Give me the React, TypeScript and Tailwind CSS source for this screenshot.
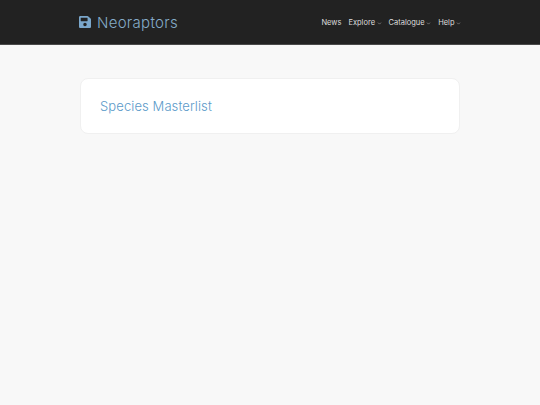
import { ChevronDown } from "lucide-react";
import { FaSave } from "react-icons/fa";

const links = [
  { label: "News" },
  { label: "Explore", caret: true },
  { label: "Catalogue", caret: true },
  { label: "Help", caret: true },
];

export default function App() {
  return (
    <div className="min-h-[405px] bg-[#f8f8f8] font-['Inter','Noto_Sans',sans-serif]">
      <nav className="h-[45px] bg-[#222222] border-b border-[#4a4a4a] flex items-center justify-between pl-[79px] pr-[79px]">
        <a className="flex items-center gap-[6px]">
          <FaSave className="w-[12px] h-[14px] shrink-0 text-[#7ba7cb]" />
          <span className="text-[15px] leading-none font-light tracking-[0.3px] text-[#85abc8]">Neoraptors</span>
        </a>
        <div className="flex items-center gap-[7px] pt-[1px]">
          {links.map(link => (
            <a key={link.label} className="flex items-center text-[7.5px] leading-none text-[#dddddd]">
              {link.label}
              {link.caret && <ChevronDown size={5} strokeWidth={2.5} className="ml-[1.5px] mt-[1px] text-[#bbbbbb]" />}
            </a>
          ))}
        </div>
      </nav>
      <main className="px-[80px] pt-[33px]">
        <div className="h-[56px] bg-white border border-[#f0f0f0] rounded-[8px] flex items-center pl-[19px]">
          <h1 className="text-[13px] leading-none font-light tracking-[0.1px] text-[#5b9ac9]">Species Masterlist</h1>
        </div>
      </main>
    </div>
  );
}
